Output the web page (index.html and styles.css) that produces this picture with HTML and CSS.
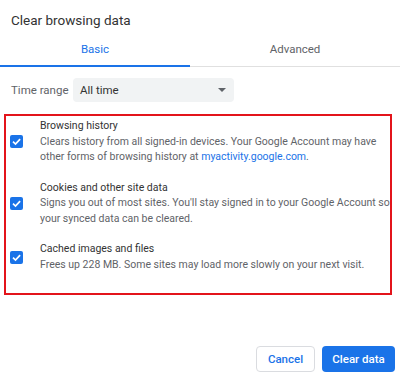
FILE: index.html
```html
<!DOCTYPE html>
<html lang="en">
<head>
  <meta charset="UTF-8" />
  <title>Clear browsing data</title>
  <link rel="stylesheet" href="styles.css">
</head>
<body>
  <div class="dialog">
    <div class="title">Clear browsing data</div>

    <div class="tabs">
      <div class="tab active">Basic</div>
      <div class="tab">Advanced</div>
    </div>

    <div class="range">
      <span class="range-label">Time range</span>
      <div class="select">
        <span>All time</span>
        <span class="arrow"></span>
      </div>
    </div>

    <div class="options">
      <div class="option">
        <span class="check"><svg viewBox="0 0 13 13" width="13" height="13"><path d="M3 6.7 L5.5 9.1 L10.1 4.1" fill="none" stroke="#fff" stroke-width="1.7"/></svg></span>
        <div class="text">
          <div class="name">Browsing history</div>
          <div class="desc">Clears history from all signed-in devices. Your Google Account may have other forms of browsing history at <a href="#">myactivity.google.com</a>.</div>
        </div>
      </div>
      <div class="option">
        <span class="check"><svg viewBox="0 0 13 13" width="13" height="13"><path d="M3 6.7 L5.5 9.1 L10.1 4.1" fill="none" stroke="#fff" stroke-width="1.7"/></svg></span>
        <div class="text">
          <div class="name">Cookies and other site data</div>
          <div class="desc">Signs you out of most sites. You'll stay signed in to your Google Account so your synced data can be cleared.</div>
        </div>
      </div>
      <div class="option">
        <span class="check"><svg viewBox="0 0 13 13" width="13" height="13"><path d="M3 6.7 L5.5 9.1 L10.1 4.1" fill="none" stroke="#fff" stroke-width="1.7"/></svg></span>
        <div class="text">
          <div class="name">Cached images and files</div>
          <div class="desc">Frees up 228 MB. Some sites may load more slowly on your next visit.</div>
        </div>
      </div>
    </div>

    <div class="footer">
      <button class="btn cancel">Cancel</button>
      <button class="btn primary">Clear data</button>
    </div>
  </div>
</body>
</html>
```

FILE: styles.css
```css
body {
  margin: 0;
  background: #fff;
  font-family: Roboto, "Liberation Sans", sans-serif;
  color: #333;
}
.dialog {
  width: 400px;
  height: 381px;
  overflow: hidden;
}
.title {
  padding: 12px 0 0 11px;
  font-size: 13.5px;
  height: 27px;
  color: #333;
}
.tabs {
  display: flex;
  border-bottom: 1px solid #e0e0e0;
}
.tab {
  flex: 1;
  text-align: center;
  font-size: 11.5px;
  color: #5f6368;
  padding: 3px 0 9px;
  border-bottom: 2px solid transparent;
  margin-bottom: -1px;
}
.tab.active {
  flex: 0 0 190px;
  color: #1a73e8;
  border-bottom-color: #1a73e8;
}
.range {
  display: flex;
  align-items: center;
  padding: 11px 0 0 11px;
}
.range-label {
  font-size: 11.5px;
  color: #5f6368;
  width: 62px;
}
.select {
  width: 161px;
  height: 24px;
  background: #f1f3f4;
  border-radius: 4px;
  display: flex;
  align-items: center;
  justify-content: space-between;
  padding: 0 6px 0 7px;
  box-sizing: border-box;
  font-size: 11.5px;
  color: #333;
}
.arrow {
  width: 0;
  height: 0;
  border-left: 4px solid transparent;
  border-right: 4px solid transparent;
  border-top: 4px solid #5f6368;
  margin-right: 2px;
}
.options {
  margin: 12px 8px 0 4px;
  height: 181px;
  border: 2px solid #e3141b;
  box-sizing: border-box;
  padding: 2px 0 0 4px;
}
.option {
  display: flex;
  align-items: center;
  margin-bottom: 15px;
}
.check {
  width: 13px;
  height: 13px;
  background: #1a73e8;
  border-radius: 2px;
  flex: 0 0 13px;
  margin: 1px 17px 0 0;
  display: flex;
}
.text {
  flex: 0 0 352px;
  font-size: 10.5px;
  line-height: 15.5px;
}
.name {
  color: #333;
}
.desc {
  color: #5f6368;
}
.desc a {
  color: #1a73e8;
  text-decoration: none;
}
.footer {
  display: flex;
  justify-content: flex-end;
  gap: 7px;
  padding: 51px 5px 0 0;
}
.btn {
  height: 26px;
  border-radius: 4px;
  font-family: Roboto, "Liberation Sans", sans-serif;
  font-size: 11.5px;
  font-weight: 500;
  padding: 0;
  white-space: nowrap;
}
.cancel {
  background: #fff;
  color: #1a73e8;
  border: 1px solid #dadce0;
  width: 59px;
}
.primary {
  background: #1a73e8;
  color: #fff;
  border: none;
  width: 73px;
}
```
